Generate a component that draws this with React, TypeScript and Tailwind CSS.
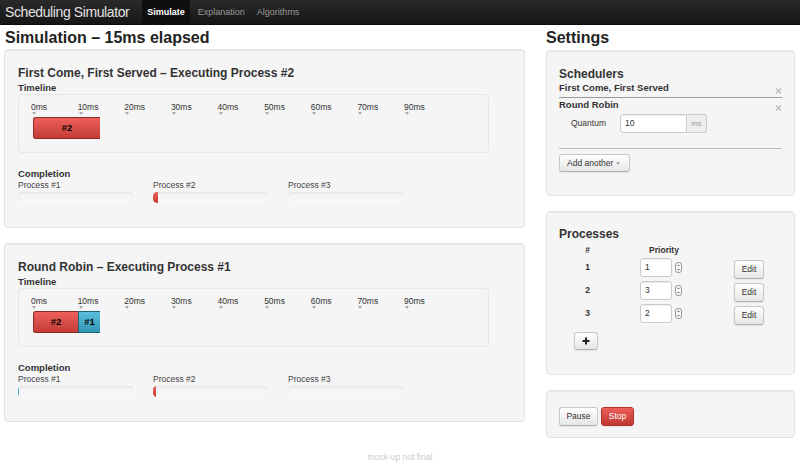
import React from "react";

type Segment = { label: string; width: number; color: "red" | "blue" };
type Progress = { pct: number; color: "red" | "blue" | "none" };

const ticks = ["0ms", "10ms", "20ms", "30ms", "40ms", "50ms", "60ms", "70ms", "90ms"];

const fill = {
  red: "bg-linear-to-b from-[#ee5f5b] to-[#c43c35] border-[#8f2a25]",
  blue: "bg-linear-to-b from-[#5bc0de] to-[#2f96b4] border-[#1d6477]",
  none: "",
};

const btn =
  "bg-linear-to-b from-white to-[#e6e6e6] border border-[#c8c8c8] border-b-[#b0b0b0] rounded-[3px] shadow-[inset_0_1px_0_rgba(255,255,255,0.2),0_1px_2px_rgba(0,0,0,0.08)] text-[#333]";

function Well({ className, children }: { className?: string; children: React.ReactNode }) {
  return (
    <div
      className={`box-border bg-[#f5f5f5] border border-[#e3e3e3] rounded-[4px] shadow-[inset_0_1px_1px_rgba(0,0,0,0.05)] ${className ?? ""}`}
    >
      {children}
    </div>
  );
}

function SimWell({ title, segments, progress }: { title: string; segments: Segment[]; progress: Progress[] }) {
  return (
    <Well className="h-[179px] px-[13px] pt-[15px]">
      <h2 className="text-[12px] leading-[16px] font-bold text-[#333]">{title}</h2>
      <div className="mt-[1px] text-[9.5px] leading-[12px] font-bold text-[#333]">Timeline</div>

      {/* timeline box */}
      <div className="box-border h-[59px] w-[471px] border border-[#e6e6e6] rounded-[4px] bg-[#f5f5f5] pt-[7px]">
        <div className="flex pl-[12px]">
          {ticks.map((t) => (
            <div key={t} className="w-[46.63px] shrink-0">
              <div className="text-[8.5px] leading-[10px] text-[#333]">{t}</div>
              <div className="ml-[1px] h-0 w-0 border-x-[2.5px] border-x-transparent border-t-[3px] border-t-[#aaa]" />
            </div>
          ))}
        </div>
        <div className="mt-[2px] ml-[14px] flex h-[22px]">
          {segments.map((s, i) => (
            <div
              key={i}
              className={`box-border h-[22px] border-y border-l ${fill[s.color]} ${i === 0 ? "rounded-l-[3px]" : ""} flex items-center justify-center text-[9.5px] font-bold text-black`}
              style={{ width: s.width }}
            >
              {s.label}
            </div>
          ))}
        </div>
      </div>

      <div className="mt-[15px] text-[9.5px] leading-[12px] font-bold text-[#333]">Completion</div>
      <div className="flex gap-[20px]">
        {progress.map((p, i) => (
          <div key={i} className="w-[115px]">
            <div className="text-[8.5px] leading-[11px] text-[#444]">Process #{i + 1}</div>
            <div className="mt-[1px] h-[11px] rounded-[4px] bg-linear-to-b from-[#f3f3f3] to-[#f9f9f9] shadow-[inset_0_1px_2px_rgba(0,0,0,0.08)] overflow-hidden">
              {p.color !== "none" && (
                <div className={`h-full rounded-l-[4px] ${fill[p.color]}`} style={{ width: `${p.pct}%` }} />
              )}
            </div>
          </div>
        ))}
      </div>
    </Well>
  );
}

function CloseX() {
  return (
    <svg width="7" height="6" viewBox="0 0 7 6" className="shrink-0">
      <path d="M1 0.5 L6 5.5 M6 0.5 L1 5.5" stroke="#bbb" strokeWidth="1.4" />
    </svg>
  );
}

function Spinner() {
  return (
    <svg width="7" height="11" viewBox="0 0 7 11" className="ml-[3px] mt-[5px]">
      <rect x="0.5" y="0.5" width="6" height="10" rx="2.5" fill="#f7f7f7" stroke="#999" />
      <path d="M2 4 L3.5 2.5 L5 4 Z M2 7 L3.5 8.5 L5 7 Z" fill="#777" />
    </svg>
  );
}

export default function App() {
  const processes = [
    { id: 1, priority: "1" },
    { id: 2, priority: "3" },
    { id: 3, priority: "2" },
  ];

  return (
    <div className="w-[800px] h-[471px] overflow-hidden bg-white font-['Liberation_Sans',Arial,sans-serif] text-[#333]">
      {/* navbar */}
      <nav className="flex h-[25px] items-stretch bg-linear-to-b from-[#2a2a2a] to-[#161616] border-b border-[#0c0c0c] box-border">
        <div className="pl-[5px] text-[14px] leading-[25px] tracking-[-0.4px] text-[#e2e2e2]">Scheduling Simulator</div>
        <div className="ml-[13px] flex">
          <div className="bg-[#0f0f0f] px-[5px] text-[9px] leading-[25px] font-bold text-white">Simulate</div>
          <div className="px-[6px] ml-[2px] text-[9px] leading-[25px] text-[#9a9a9a]">Explanation</div>
          <div className="px-[6px] text-[9px] leading-[25px] text-[#9a9a9a]">Algorithms</div>
        </div>
      </nav>

      <div className="flex px-[4px]">
        {/* left column */}
        <div className="w-[521px]">
          <h1 className="h-[24px] pt-[2px] text-[16px] leading-[22px] font-bold text-[#222] pl-[1px]">
            Simulation – 15ms elapsed
          </h1>
          <SimWell
            title="First Come, First Served – Executing Process #2"
            segments={[{ label: "#2", width: 67, color: "red" }]}
            progress={[
              { pct: 0, color: "none" },
              { pct: 4.5, color: "red" },
              { pct: 0, color: "none" },
            ]}
          />
          <div className="mt-[15px]">
            <SimWell
              title="Round Robin – Executing Process #1"
              segments={[
                { label: "#2", width: 45, color: "red" },
                { label: "#1", width: 22, color: "blue" },
              ]}
              progress={[
                { pct: 1.2, color: "blue" },
                { pct: 3, color: "red" },
                { pct: 0, color: "none" },
              ]}
            />
          </div>
        </div>

        {/* right column */}
        <div className="ml-[21px] w-[249px]">
          <h1 className="h-[24px] pt-[2px] text-[16px] leading-[22px] font-bold text-[#222]">Settings</h1>

          <Well className="mt-[1px] h-[146px] px-[12px] pt-[15px]">
            <h3 className="text-[12px] leading-[16px] font-bold">Schedulers</h3>
            <div className="box-border flex h-[16px] items-start justify-between border-b border-[#999]">
              <span className="text-[9.5px] leading-[12px] font-bold">First Come, First Served</span>
              <span className="mt-[6px]">
                <CloseX />
              </span>
            </div>
            <div className="mt-[1px] flex h-[12px] items-start justify-between">
              <span className="text-[9.5px] leading-[12px] font-bold">Round Robin</span>
              <span className="mt-[6px]">
                <CloseX />
              </span>
            </div>
            <div className="mt-[3px] flex items-center">
              <label className="ml-[12px] w-[49px] text-[8.5px] text-[#333]">Quantum</label>
              <div className="box-border flex h-[19px] w-[67px] items-center rounded-l-[3px] border border-[#ccc] bg-white pl-[4px] text-[8.5px] shadow-[inset_0_1px_1px_rgba(0,0,0,0.075)]">
                10
              </div>
              <div className="box-border flex h-[19px] w-[20px] items-center justify-center rounded-r-[3px] border border-l-0 border-[#ccc] bg-[#eee] text-[7.5px] text-[#999]">
                ms
              </div>
            </div>
            <div className="mt-[15px] border-t border-[#bbb]" />
            <button className={`${btn} mt-[5px] box-border flex h-[18px] w-[71px] items-center pl-[7px] text-[8.5px]`}>
              Add another
              <span className="ml-[3px] mt-[1px] h-0 w-0 border-x-[2.5px] border-x-transparent border-t-[3px] border-t-[#aaa]" />
            </button>
          </Well>

          <Well className="mt-[15px] h-[164px] px-[12px] pt-[14px]">
            <h3 className="text-[12px] leading-[16px] font-bold">Processes</h3>
            <div className="mt-[3px] flex text-[8.5px] leading-[11px] font-bold">
              <div className="w-[57px] text-center">#</div>
              <div className="w-[96px] text-center">Priority</div>
            </div>
            <div className="mt-[1px]">
              {processes.map((p) => (
                <div key={p.id} className="flex h-[23px] items-start">
                  <div className="mt-[1px] w-[57px] text-center text-[8.5px] leading-[19px] font-bold">{p.id}</div>
                  <div className="flex w-[96px] pl-[24px]">
                    <div className="mt-[1px] box-border flex h-[19px] w-[32px] items-center rounded-[3px] border border-[#ccc] bg-white pl-[4px] text-[8.5px] shadow-[inset_0_1px_1px_rgba(0,0,0,0.075)]">
                      {p.priority}
                    </div>
                    <Spinner />
                  </div>
                  <button className={`${btn} ml-[22px] mt-[3px] box-border h-[19px] w-[30px] text-[8.5px]`}>Edit</button>
                </div>
              ))}
            </div>
            <button className={`${btn} ml-[15px] mt-[6px] box-border flex h-[18px] w-[24px] items-center justify-center`}>
              <svg width="8" height="8" viewBox="0 0 8 8">
                <path d="M4 0.5 V7.5 M0.5 4 H7.5" stroke="#222" strokeWidth="2" />
              </svg>
            </button>
          </Well>

          <Well className="mt-[15px] h-[48px] px-[12px] pt-[16px]">
            <div className="flex gap-[3px]">
              <button className={`${btn} box-border h-[19px] w-[39px] text-[8.5px]`}>Pause</button>
              <button className="box-border h-[19px] w-[33px] rounded-[3px] border border-[#b3302a] bg-linear-to-b from-[#ee5f5b] to-[#bd362f] text-[8.5px] text-white shadow-[0_1px_2px_rgba(0,0,0,0.08)]">
                Stop
              </button>
            </div>
          </Well>
        </div>
      </div>

      <div className="mt-[14px] text-center text-[8.5px] leading-[11px] text-[#ccc]">mock-up not final</div>
    </div>
  );
}
